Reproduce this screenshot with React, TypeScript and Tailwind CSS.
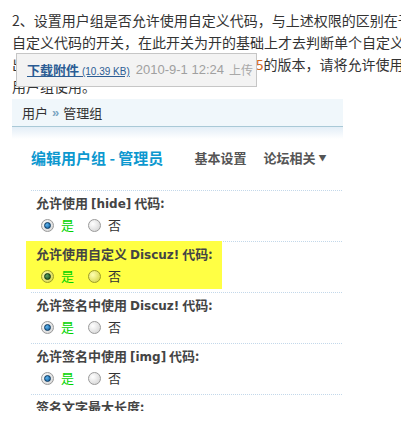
import React from "react";

const cjk = { fontFamily: '"Noto Sans CJK SC", "Liberation Sans", sans-serif' };

type RadioProps = { checked?: boolean; marked?: boolean };

function Radio({ checked, marked }: RadioProps) {
  return (
    <span
      className={
        marked
          ? "w-[13px] h-[13px] rounded-full border border-[#9c9c2a] bg-[radial-gradient(circle_at_35%_35%,#ffffb0,#cfcf3a)] flex items-center justify-center shrink-0"
          : "w-[13px] h-[13px] rounded-full border border-[#9a9a9a] bg-[radial-gradient(circle_at_35%_35%,#ffffff,#cfcfcf)] flex items-center justify-center shrink-0"
      }
    >
      {checked && (
        <span
          className={
            marked
              ? "w-[7px] h-[7px] rounded-full bg-[radial-gradient(circle_at_35%_35%,#5aa060,#164a1c)] border border-[#0f3312]"
              : "w-[7px] h-[7px] rounded-full bg-[radial-gradient(circle_at_35%_35%,#5fb4ee,#0c5896)] border border-[#07365e]"
          }
        />
      )}
    </span>
  );
}

type RowProps = { label: React.ReactNode; marked?: boolean };

function SettingRow({ label, marked }: RowProps) {
  return (
    <div className="relative h-[51px] border-t border-dotted border-[#c3d8ea]">
      {marked && <div className="absolute left-[-5px] top-[-1px] w-[196px] h-[48px] bg-[#ffff44]" />}
      <div className="relative pl-[5px] pt-[3px] text-[13px] leading-[18px] font-bold text-[#444] whitespace-nowrap">
        {label}
      </div>
      <div className="relative flex items-center h-[22px] mt-[1px] pl-[10px] text-[13px]">
        <Radio checked marked={marked} />
        <span className="ml-[7px] text-[#00d400]">是</span>
        <span className="ml-[14px]">
          <Radio marked={marked} />
        </span>
        <span className="ml-[7px] text-[#333]">否</span>
      </div>
    </div>
  );
}

// 标签里的英文部分（截图里是 Verdana 一类字体）
function Code({ children }: { children: React.ReactNode }) {
  return <span className="font-['DejaVu_Sans'] text-[12px]">{children}</span>;
}

export default function App() {
  const latin = "font-['Liberation_Sans']";
  return (
    <div className="relative w-[401px] h-[428px] overflow-hidden bg-white" style={cjk}>
      {/* 正文 */}
      <div className="pt-[9px] pl-[12px] text-[14px] leading-[22px] text-[#333] whitespace-nowrap">
        <div>2、设置用户组是否允许使用自定义代码，与上述权限的区别在于这里是总开关，</div>
        <div>自定义代码的开关，在此开关为开的基础上才去判断单个自定义代码是否可用。</div>
        <div>
          出于兼容性考虑，对从旧版本升级到X1<span className="text-[#d2691e]">.5</span>的版本，请将允许使用
          <span className="text-[#d2691e]">自定义代码</span>开启
        </div>
        <div>用户组使用。</div>
      </div>

      {/* 附件提示 */}
      <div className="absolute left-[16px] top-[53px] w-[241px] h-[34px] bg-[#f3f3f3] border border-[#c6c6c6] flex items-center pl-[10px] whitespace-nowrap">
        <a className="text-[#2b5c94] underline font-bold text-[13px]">
          下载附件 <span className={`${latin} font-normal text-[10px]`}>(10.39 KB)</span>
        </a>
        <span className={`${latin} ml-[6px] text-[13px] text-[#a0a0a0]`}>2010-9-1 12:24</span>
        <span className="ml-[5px] text-[12px] text-[#a8a8a8]">上传</span>
      </div>

      {/* 后台截图 */}
      <div className="mt-[2px] ml-[12px] w-[331px] h-[312px] overflow-hidden">
        <div className="h-[28px] bg-[#f0f7fb] border-b border-[#a9c9d7] flex items-center pl-[10px] text-[13px] text-[#333]">
          用户
          <span className={`${latin} mx-[4px] text-[13px] font-bold text-[#7aa5c2]`}>»</span>
          管理组
        </div>

        <div className="bg-[linear-gradient(to_bottom,#e3eef7,#ffffff_12px)] h-[63px] pt-[21px] pl-[19px] flex items-start whitespace-nowrap">
          <span className="text-[15px] leading-[20px] font-bold text-[#0d98cf]">编辑用户组 - 管理员</span>
          <span className="ml-[31px] text-[13px] leading-[20px] font-bold text-[#555]">基本设置</span>
          <span className="ml-[17px] text-[13px] leading-[20px] font-bold text-[#555] flex items-center">
            论坛相关
            <span className="ml-[3px] text-[8px] text-[#555]">▼</span>
          </span>
        </div>

        <div className="ml-[19px] w-[311px]">
          <SettingRow
            label={
              <>
                允许使用 <Code>[hide]</Code> 代码:
              </>
            }
          />
          <SettingRow
            marked
            label={
              <>
                允许使用自定义 <Code>Discuz!</Code> 代码:
              </>
            }
          />
          <SettingRow
            label={
              <>
                允许签名中使用 <Code>Discuz!</Code> 代码:
              </>
            }
          />
          <SettingRow
            label={
              <>
                允许签名中使用 <Code>[img]</Code> 代码:
              </>
            }
          />
          <div className="border-t border-dotted border-[#c3d8ea] pl-[5px] pt-[3px] text-[13px] leading-[18px] font-bold text-[#444]">
            签名文字最大长度:
          </div>
        </div>
      </div>
    </div>
  );
}
